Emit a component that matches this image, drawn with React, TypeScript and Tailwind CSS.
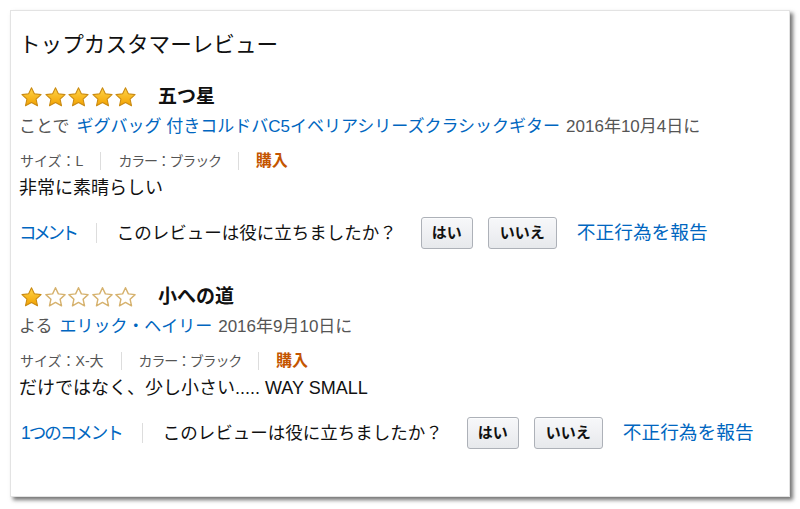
const reviews = [
  {
    rating: 5,
    title: "五つ星",
    prefix: "ことで",
    author: "ギグバッグ 付きコルドバC5イベリアシリーズクラシックギター",
    date: "2016年10月4日に",
    size: "サイズ：L",
    color: "カラー：ブラック",
    body: "非常に素晴らしい",
    comment: "コメント",
    commentClass: "tracking-[-3.3px]",
  },
  {
    rating: 1,
    title: "小への道",
    prefix: "よる",
    author: "エリック・ヘイリー",
    date: "2016年9月10日に",
    size: "サイズ：X-大",
    color: "カラー：ブラック",
    body: "だけではなく、少し小さい..... WAY SMALL",
    comment: "1つのコメント",
    commentClass: "tracking-[-2px] pl-[2px]",
  },
];

function Star({ filled }: { filled: boolean }) {
  return (
    <svg width="23" height="22" viewBox="0 0 24 23" className="shrink-0">
      <defs>
        <linearGradient id="starGold" x1="0" y1="0" x2="0" y2="1">
          <stop offset="0%" stopColor="#ffd54a" />
          <stop offset="100%" stopColor="#f2a100" />
        </linearGradient>
      </defs>
      <path
        d="M12 1.8l3 6.4 7 .8-5.2 4.8 1.5 6.9L12 17.2l-6.3 3.5 1.5-6.9L2 9l7-.8z"
        fill={filled ? "url(#starGold)" : "#ffffff"}
        stroke={filled ? "#c98a12" : "#d6b26e"}
        strokeWidth={filled ? 1.1 : 1.5}
        strokeLinejoin="round"
      />
    </svg>
  );
}

function Bar() {
  return <span className="mx-[17px] inline-block h-[18px] w-px bg-[#dddddd]" />;
}

function Review({ review }: { review: (typeof reviews)[number] }) {
  return (
    <div className="flex flex-col">
      {/* Stars + title */}
      <div className="flex h-[30px] items-center">
        <div className="flex gap-[0.5px] pl-px">
          {[1, 2, 3, 4, 5].map((n) => (
            <Star key={n} filled={n <= review.rating} />
          ))}
        </div>
        <span className="ml-[21px] text-[19px] font-bold text-[#111]">
          {review.title}
        </span>
      </div>

      {/* Author + date */}
      <div className="flex h-[30px] items-center text-[17px] text-[#555]">
        <span>{review.prefix}</span>
        <a className="ml-[7px] text-[#0066c0]">{review.author}</a>
        <span className="ml-[6px]">{review.date}</span>
      </div>

      {/* Variant info */}
      <div className="mt-[4px] flex h-[30px] items-center text-[14px] text-[#555]">
        <span className="pl-px">{review.size}</span>
        <Bar />
        <span className="tracking-[-1.2px]">{review.color}</span>
        <Bar />
        <span className="text-[16px] font-bold text-[#c45500]">購入</span>
      </div>

      <div className="flex h-[24px] items-center text-[18px] text-[#111]">
        {review.body}
      </div>

      {/* Actions */}
      <div className="mt-[15px] flex h-[36px] items-center text-[17.5px]">
        <a className={`text-[#0066c0] ${review.commentClass}`}>{review.comment}</a>
        <span className="mx-[20px] inline-block h-[20px] w-px bg-[#dddddd]" />
        <span className="text-[#111]">このレビューは役に立ちましたか？</span>
        <button className="ml-[24px] h-[32px] rounded-[3px] border border-[#adb1b8] bg-gradient-to-b from-[#f7f8fa] to-[#e7e9ec] px-[10px] text-[15px] font-bold text-[#111] shadow-[0_1px_0_rgba(255,255,255,0.6)_inset]">
          はい
        </button>
        <button className="ml-[15px] h-[32px] rounded-[3px] border border-[#adb1b8] bg-gradient-to-b from-[#f7f8fa] to-[#e7e9ec] px-[11px] text-[15px] font-bold text-[#111] shadow-[0_1px_0_rgba(255,255,255,0.6)_inset]">
          いいえ
        </button>
        <a className="ml-[20px] text-[18.7px] text-[#0066c0]">不正行為を報告</a>
      </div>
    </div>
  );
}

export default function App() {
  return (
    <div className="h-[509px] w-[800px] bg-white pl-[10px] pt-[10px] font-['Liberation_Sans','Noto_Sans_CJK_JP',sans-serif]">
      <div className="h-[487px] w-[780px] border border-[#e3e3e3] bg-white pl-[8px] pt-[14px] shadow-[3px_3px_4px_rgba(0,0,0,0.55)]">
        <h2 className="flex h-[40px] items-center text-[21.6px] text-[#111]">
          トップカスタマーレビュー
        </h2>
        <div className="mt-[17px] flex flex-col gap-[31px]">
          {reviews.map((review, index) => (
            <Review key={index} review={review} />
          ))}
        </div>
      </div>
    </div>
  );
}
